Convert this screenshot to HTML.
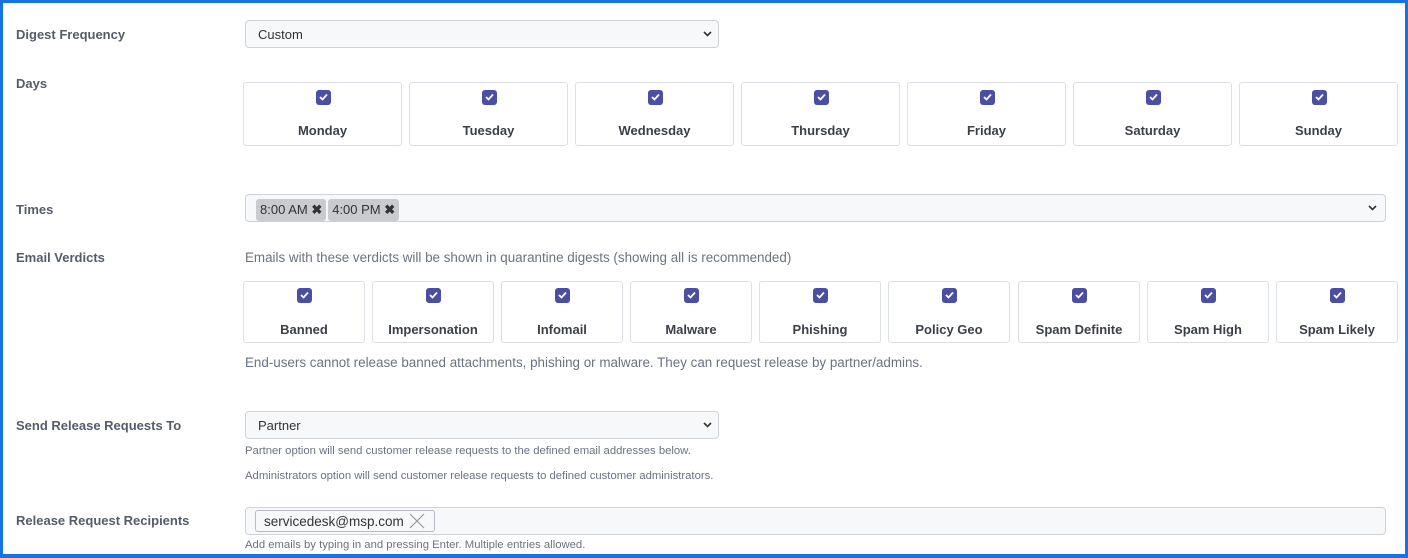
<!DOCTYPE html>
<html><head><style>
*{box-sizing:border-box;margin:0;padding:0}
body{width:1408px;height:558px;overflow:hidden;background:#fff;font-family:"Liberation Sans",sans-serif;position:relative}
.frame{position:absolute;inset:0;border:3px solid #1673e6;border-bottom-width:4px}
.lbl{position:absolute;left:16px;font-size:13px;font-weight:bold;color:#555c6b}
.sel{position:absolute;left:245px;width:474px;height:28px;border:1px solid #cfd3d8;border-radius:4px;background:#f7f8fa;font-size:13px;color:#333;padding:6px 12px}
.sel svg{position:absolute;right:6px;top:10px}
.box{position:absolute;border:1px solid #dcdfe3;border-radius:3px;background:#fff;text-align:center;font-size:13px;font-weight:bold;color:#3b3f47}
.cb{position:absolute;left:50%;margin-left:-7px;width:15px;height:15px;border-radius:3px;background:#4a4fa3}
.cb svg{position:absolute;left:3px;top:3px}
.help{position:absolute;left:245px;font-size:13.4px;color:#6b7280}
.small{position:absolute;left:245px;font-size:11.3px;color:#6b7280}
.tag{display:inline-block;background:#c9cbcf;border-radius:3px;padding:3px 4px;font-size:13px;color:#333;margin-right:2px}
</style></head><body>
<div class="frame"></div>

<div class="lbl" style="top:27px">Digest Frequency</div>
<div class="sel" style="top:20px">Custom<svg width="9" height="6" viewBox="0 0 9 6"><path d="M1 1l3.5 3.5L8 1" stroke="#333" stroke-width="1.6" fill="none"/></svg></div>

<div class="lbl" style="top:76px">Days</div>
<div class="box" style="left:243px;top:82px;width:159px;height:64px"><div class="cb" style="top:7px"><svg width="9" height="8" viewBox="0 0 9 8"><path d="M1 4l2.5 2.5L8 1.5" stroke="#fff" stroke-width="1.8" fill="none"/></svg></div><div style="margin-top:40px">Monday</div></div>
<div class="box" style="left:409px;top:82px;width:159px;height:64px"><div class="cb" style="top:7px"><svg width="9" height="8" viewBox="0 0 9 8"><path d="M1 4l2.5 2.5L8 1.5" stroke="#fff" stroke-width="1.8" fill="none"/></svg></div><div style="margin-top:40px">Tuesday</div></div>
<div class="box" style="left:575px;top:82px;width:159px;height:64px"><div class="cb" style="top:7px"><svg width="9" height="8" viewBox="0 0 9 8"><path d="M1 4l2.5 2.5L8 1.5" stroke="#fff" stroke-width="1.8" fill="none"/></svg></div><div style="margin-top:40px">Wednesday</div></div>
<div class="box" style="left:741px;top:82px;width:159px;height:64px"><div class="cb" style="top:7px"><svg width="9" height="8" viewBox="0 0 9 8"><path d="M1 4l2.5 2.5L8 1.5" stroke="#fff" stroke-width="1.8" fill="none"/></svg></div><div style="margin-top:40px">Thursday</div></div>
<div class="box" style="left:907px;top:82px;width:159px;height:64px"><div class="cb" style="top:7px"><svg width="9" height="8" viewBox="0 0 9 8"><path d="M1 4l2.5 2.5L8 1.5" stroke="#fff" stroke-width="1.8" fill="none"/></svg></div><div style="margin-top:40px">Friday</div></div>
<div class="box" style="left:1073px;top:82px;width:159px;height:64px"><div class="cb" style="top:7px"><svg width="9" height="8" viewBox="0 0 9 8"><path d="M1 4l2.5 2.5L8 1.5" stroke="#fff" stroke-width="1.8" fill="none"/></svg></div><div style="margin-top:40px">Saturday</div></div>
<div class="box" style="left:1239px;top:82px;width:159px;height:64px"><div class="cb" style="top:7px"><svg width="9" height="8" viewBox="0 0 9 8"><path d="M1 4l2.5 2.5L8 1.5" stroke="#fff" stroke-width="1.8" fill="none"/></svg></div><div style="margin-top:40px">Sunday</div></div>

<div class="lbl" style="top:202px">Times</div>
<div class="sel" style="top:194px;width:1141px;padding:4px 10px"><span class="tag">8:00 AM <b>✖</b></span><span class="tag">4:00 PM <b>✖</b></span><svg width="9" height="6" viewBox="0 0 9 6" style="right:8px"><path d="M1 1l3.5 3.5L8 1" stroke="#333" stroke-width="1.6" fill="none"/></svg></div>

<div class="lbl" style="top:250px">Email Verdicts</div>
<div class="help" style="top:250px">Emails with these verdicts will be shown in quarantine digests (showing all is recommended)</div>

<div class="box" style="left:243px;top:281px;width:122px;height:62px"><div class="cb" style="top:6px"><svg width="9" height="8" viewBox="0 0 9 8"><path d="M1 4l2.5 2.5L8 1.5" stroke="#fff" stroke-width="1.8" fill="none"/></svg></div><div style="margin-top:40px">Banned</div></div>
<div class="box" style="left:372px;top:281px;width:122px;height:62px"><div class="cb" style="top:6px"><svg width="9" height="8" viewBox="0 0 9 8"><path d="M1 4l2.5 2.5L8 1.5" stroke="#fff" stroke-width="1.8" fill="none"/></svg></div><div style="margin-top:40px">Impersonation</div></div>
<div class="box" style="left:501px;top:281px;width:122px;height:62px"><div class="cb" style="top:6px"><svg width="9" height="8" viewBox="0 0 9 8"><path d="M1 4l2.5 2.5L8 1.5" stroke="#fff" stroke-width="1.8" fill="none"/></svg></div><div style="margin-top:40px">Infomail</div></div>
<div class="box" style="left:630px;top:281px;width:122px;height:62px"><div class="cb" style="top:6px"><svg width="9" height="8" viewBox="0 0 9 8"><path d="M1 4l2.5 2.5L8 1.5" stroke="#fff" stroke-width="1.8" fill="none"/></svg></div><div style="margin-top:40px">Malware</div></div>
<div class="box" style="left:759px;top:281px;width:122px;height:62px"><div class="cb" style="top:6px"><svg width="9" height="8" viewBox="0 0 9 8"><path d="M1 4l2.5 2.5L8 1.5" stroke="#fff" stroke-width="1.8" fill="none"/></svg></div><div style="margin-top:40px">Phishing</div></div>
<div class="box" style="left:888px;top:281px;width:122px;height:62px"><div class="cb" style="top:6px"><svg width="9" height="8" viewBox="0 0 9 8"><path d="M1 4l2.5 2.5L8 1.5" stroke="#fff" stroke-width="1.8" fill="none"/></svg></div><div style="margin-top:40px">Policy Geo</div></div>
<div class="box" style="left:1018px;top:281px;width:122px;height:62px"><div class="cb" style="top:6px"><svg width="9" height="8" viewBox="0 0 9 8"><path d="M1 4l2.5 2.5L8 1.5" stroke="#fff" stroke-width="1.8" fill="none"/></svg></div><div style="margin-top:40px">Spam Definite</div></div>
<div class="box" style="left:1147px;top:281px;width:122px;height:62px"><div class="cb" style="top:6px"><svg width="9" height="8" viewBox="0 0 9 8"><path d="M1 4l2.5 2.5L8 1.5" stroke="#fff" stroke-width="1.8" fill="none"/></svg></div><div style="margin-top:40px">Spam High</div></div>
<div class="box" style="left:1276px;top:281px;width:122px;height:62px"><div class="cb" style="top:6px"><svg width="9" height="8" viewBox="0 0 9 8"><path d="M1 4l2.5 2.5L8 1.5" stroke="#fff" stroke-width="1.8" fill="none"/></svg></div><div style="margin-top:40px">Spam Likely</div></div>

<div class="help" style="top:355px">End-users cannot release banned attachments, phishing or malware. They can request release by partner/admins.</div>

<div class="lbl" style="top:418px">Send Release Requests To</div>
<div class="sel" style="top:411px">Partner<svg width="9" height="6" viewBox="0 0 9 6"><path d="M1 1l3.5 3.5L8 1" stroke="#333" stroke-width="1.6" fill="none"/></svg></div>
<div class="small" style="top:445px">Partner option will send customer release requests to the defined email addresses below.</div>
<div class="small" style="top:470px">Administrators option will send customer release requests to defined customer administrators.</div>

<div class="lbl" style="top:513px">Release Request Recipients</div>
<div class="sel" style="top:507px;width:1141px;padding:2px 9px"><span style="display:inline-block;border:1px solid #b8bcc2;border-radius:3px;padding:2px 8px;font-size:13.5px;color:#333;background:#f7f8fa">servicedesk@msp.com <svg width="18" height="16" viewBox="0 0 18 16" style="position:static;vertical-align:-3px"><path d="M2 1l14 14M16 1L2 15" stroke="#999" stroke-width="1.2"/></svg></span></div>
<div class="small" style="top:539px">Add emails by typing in and pressing Enter. Multiple entries allowed.</div>
</body></html>
